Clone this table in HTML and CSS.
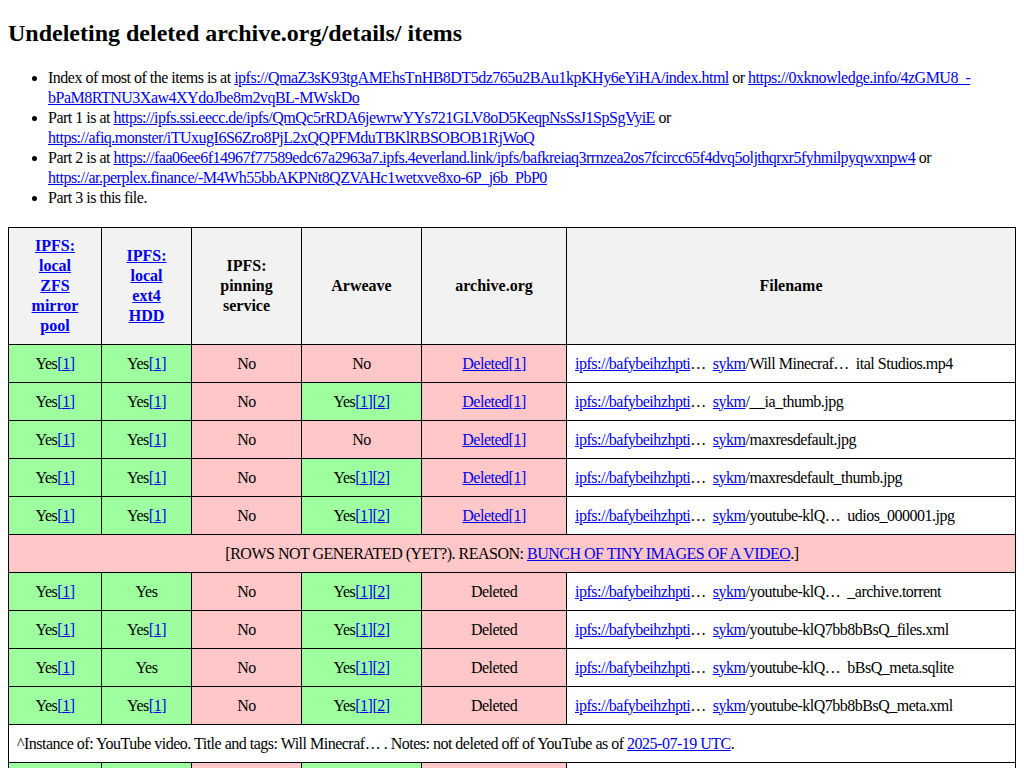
FILE: index.html
```html
<!DOCTYPE html>
<html>
<head>
<meta charset="utf-8">
<title>Undeleting deleted archive.org/details/ items</title>
<link rel="stylesheet" href="styles.css">
</head>
<body>
<h1 class="title">Undeleting deleted archive.org/details/ items</h1>
<ul class="parts">
  <li>Index of most of the items is at <a href="#">ipfs://QmaZ3sK93tgAMEhsTnHB8DT5dz765u2BAu1kpKHy6eYiHA/index.html</a> or <a href="#">https://0xknowledge.info/4zGMU8_-bPaM8RTNU3Xaw4XYdoJbe8m2vqBL-MWskDo</a></li>
  <li>Part 1 is at <a href="#">https://ipfs.ssi.eecc.de/ipfs/QmQc5rRDA6jewrwYYs721GLV8oD5KeqpNsSsJ1SpSgVyiE</a> or <a href="#">https://afiq.monster/iTUxugI6S6Zro8PjL2xQQPFMduTBKlRBSOBOB1RjWoQ</a></li>
  <li>Part 2 is at <a href="#">https://faa06ee6f14967f77589edc67a2963a7.ipfs.4everland.link/ipfs/bafkreiaq3rrnzea2os7fcircc65f4dvq5oljthqrxr5fyhmilpyqwxnpw4</a> or <a href="#">https://ar.perplex.finance/-M4Wh55bbAKPNt8QZVAHc1wetxve8xo-6P_j6b_PbP0</a></li>
  <li>Part 3 is this file.</li>
</ul>
<table class="items">
  <colgroup>
    <col class="c1"><col class="c2"><col class="c3"><col class="c4"><col class="c5"><col class="c6">
  </colgroup>
  <thead>
    <tr>
      <th><a href="#">IPFS:<br>local<br>ZFS<br>mirror<br>pool</a></th>
      <th><a href="#">IPFS:<br>local<br>ext4<br>HDD</a></th>
      <th>IPFS:<br>pinning<br>service</th>
      <th>Arweave</th>
      <th>archive.org</th>
      <th>Filename</th>
    </tr>
  </thead>
  <tbody>
    <tr>
      <td class="yes">Yes<a href="#">[1]</a></td>
      <td class="yes">Yes<a href="#">[1]</a></td>
      <td class="no">No</td>
      <td class="no">No</td>
      <td class="no"><a href="#">Deleted</a><a href="#">[1]</a></td>
      <td class="fn"><a href="#">ipfs://bafybeihzhpti</a>…&nbsp; <a href="#">sykm</a>/Will Minecraf…&nbsp; ital Studios.mp4</td>
    </tr>
    <tr>
      <td class="yes">Yes<a href="#">[1]</a></td>
      <td class="yes">Yes<a href="#">[1]</a></td>
      <td class="no">No</td>
      <td class="yes">Yes<a href="#">[1]</a><a href="#">[2]</a></td>
      <td class="no"><a href="#">Deleted</a><a href="#">[1]</a></td>
      <td class="fn"><a href="#">ipfs://bafybeihzhpti</a>…&nbsp; <a href="#">sykm</a>/__ia_thumb.jpg</td>
    </tr>
    <tr>
      <td class="yes">Yes<a href="#">[1]</a></td>
      <td class="yes">Yes<a href="#">[1]</a></td>
      <td class="no">No</td>
      <td class="no">No</td>
      <td class="no"><a href="#">Deleted</a><a href="#">[1]</a></td>
      <td class="fn"><a href="#">ipfs://bafybeihzhpti</a>…&nbsp; <a href="#">sykm</a>/maxresdefault.jpg</td>
    </tr>
    <tr>
      <td class="yes">Yes<a href="#">[1]</a></td>
      <td class="yes">Yes<a href="#">[1]</a></td>
      <td class="no">No</td>
      <td class="yes">Yes<a href="#">[1]</a><a href="#">[2]</a></td>
      <td class="no"><a href="#">Deleted</a><a href="#">[1]</a></td>
      <td class="fn"><a href="#">ipfs://bafybeihzhpti</a>…&nbsp; <a href="#">sykm</a>/maxresdefault_thumb.jpg</td>
    </tr>
    <tr>
      <td class="yes">Yes<a href="#">[1]</a></td>
      <td class="yes">Yes<a href="#">[1]</a></td>
      <td class="no">No</td>
      <td class="yes">Yes<a href="#">[1]</a><a href="#">[2]</a></td>
      <td class="no"><a href="#">Deleted</a><a href="#">[1]</a></td>
      <td class="fn"><a href="#">ipfs://bafybeihzhpti</a>…&nbsp; <a href="#">sykm</a>/youtube-klQ…&nbsp; udios_000001.jpg</td>
    </tr>
    <tr>
      <td class="no skipped" colspan="6">[ROWS NOT GENERATED (YET?). REASON: <a href="#">BUNCH OF TINY IMAGES OF A VIDEO</a>.]</td>
    </tr>
    <tr>
      <td class="yes">Yes<a href="#">[1]</a></td>
      <td class="yes">Yes</td>
      <td class="no">No</td>
      <td class="yes">Yes<a href="#">[1]</a><a href="#">[2]</a></td>
      <td class="no">Deleted</td>
      <td class="fn"><a href="#">ipfs://bafybeihzhpti</a>…&nbsp; <a href="#">sykm</a>/youtube-klQ…&nbsp; _archive.torrent</td>
    </tr>
    <tr>
      <td class="yes">Yes<a href="#">[1]</a></td>
      <td class="yes">Yes<a href="#">[1]</a></td>
      <td class="no">No</td>
      <td class="yes">Yes<a href="#">[1]</a><a href="#">[2]</a></td>
      <td class="no">Deleted</td>
      <td class="fn"><a href="#">ipfs://bafybeihzhpti</a>…&nbsp; <a href="#">sykm</a>/youtube-klQ7bb8bBsQ_files.xml</td>
    </tr>
    <tr>
      <td class="yes">Yes<a href="#">[1]</a></td>
      <td class="yes">Yes</td>
      <td class="no">No</td>
      <td class="yes">Yes<a href="#">[1]</a><a href="#">[2]</a></td>
      <td class="no">Deleted</td>
      <td class="fn"><a href="#">ipfs://bafybeihzhpti</a>…&nbsp; <a href="#">sykm</a>/youtube-klQ…&nbsp; bBsQ_meta.sqlite</td>
    </tr>
    <tr>
      <td class="yes">Yes<a href="#">[1]</a></td>
      <td class="yes">Yes<a href="#">[1]</a></td>
      <td class="no">No</td>
      <td class="yes">Yes<a href="#">[1]</a><a href="#">[2]</a></td>
      <td class="no">Deleted</td>
      <td class="fn"><a href="#">ipfs://bafybeihzhpti</a>…&nbsp; <a href="#">sykm</a>/youtube-klQ7bb8bBsQ_meta.xml</td>
    </tr>
    <tr>
      <td class="note" colspan="6">^Instance of: YouTube video. Title and tags: Will Minecraf… . Notes: not deleted off of YouTube as of <a href="#">2025-07-19 UTC</a>.</td>
    </tr>
    <tr>
      <td class="yes">Yes<a href="#">[1]</a></td>
      <td class="yes">Yes<a href="#">[1]</a></td>
      <td class="no">No</td>
      <td class="yes">Yes<a href="#">[1]</a><a href="#">[2]</a></td>
      <td class="no"><a href="#">Deleted</a><a href="#">[1]</a></td>
      <td class="fn"><a href="#">ipfs://bafybeihzhpti</a>…&nbsp; <a href="#">sykm</a>/youtube-klQ7bb8bBsQ.info.json</td>
    </tr>
  </tbody>
</table>
</body>
</html>
```

FILE: styles.css
```css
html {
  background: #ffffff;
}

body {
  margin: 8px;
  font-family: "Liberation Serif", "Times New Roman", serif;
  font-size: 16px;
  line-height: 20px;
  letter-spacing: -0.5px;
  color: #000000;
}

a {
  color: #0000ee;
  text-decoration: underline;
}

.title {
  font-size: 24px;
  font-weight: bold;
  line-height: 30px;
  letter-spacing: 0;
  margin: 10px 0 20px 0;
}

.parts {
  margin: 0 0 19px 0;
  padding-left: 40px;
}

.items {
  width: 100%;
  border-collapse: collapse;
  table-layout: fixed;
}

.c1 { width: 93px; }
.c2 { width: 90px; }
.c3 { width: 110px; }
.c4 { width: 120px; }
.c5 { width: 145px; }
.c6 { width: auto; }

.items th,
.items td {
  border: 1px solid #000000;
  padding: 8.5px 8px;
  text-align: center;
  vertical-align: middle;
}

.items th {
  background: #f2f2f2;
  font-weight: bold;
  letter-spacing: 0;
  padding: 8px 8px;
}

.items .yes {
  background: #9eff9e;
}

.items .no {
  background: #ffc7c7;
}

.items .fn {
  text-align: left;
  white-space: nowrap;
  overflow: hidden;
  background: #ffffff;
}

.items .note {
  text-align: left;
  background: #ffffff;
}
```
